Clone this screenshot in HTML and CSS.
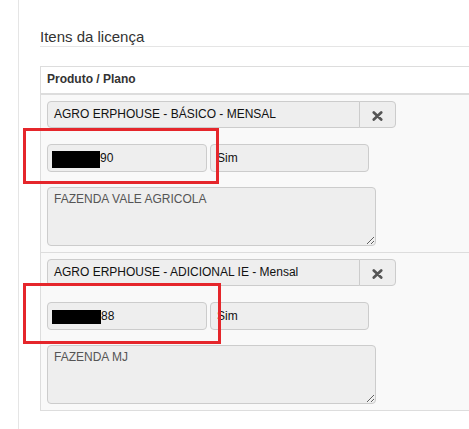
FILE: index.html
```html
<!DOCTYPE html>
<html lang="pt">
<head>
<meta charset="utf-8">
<title>Itens da licença</title>
<link rel="stylesheet" href="styles.css">
</head>
<body>
<div class="page">
  <div class="content">
    <div class="legend">Itens da licença</div>
    <div class="table">
      <div class="thead">Produto / Plano</div>
      <div class="row">
        <div class="group">
          <div class="field grow">AGRO ERPHOUSE - BÁSICO - MENSAL</div>
          <div class="addon"><svg width="11" height="10" viewBox="0 0 11 10"><path d="M1.8 1.5 L9.2 8.5 M9.2 1.5 L1.8 8.5" stroke="#555" stroke-width="2.7" stroke-linecap="round"/></svg></div>
        </div>
        <div class="pair">
          <div class="field f-left"><span class="redact r1"></span>90</div>
          <div class="field f-right">Sim</div>
        </div>
        <textarea class="notes" readonly>FAZENDA VALE AGRICOLA</textarea>
      </div>
      <div class="row">
        <div class="group">
          <div class="field grow">AGRO ERPHOUSE - ADICIONAL IE - Mensal</div>
          <div class="addon"><svg width="11" height="10" viewBox="0 0 11 10"><path d="M1.8 1.5 L9.2 8.5 M9.2 1.5 L1.8 8.5" stroke="#555" stroke-width="2.7" stroke-linecap="round"/></svg></div>
        </div>
        <div class="pair">
          <div class="field f-left"><span class="redact r2"></span>88</div>
          <div class="field f-right">Sim</div>
        </div>
        <textarea class="notes" readonly>FAZENDA MJ</textarea>
      </div>
    </div>
  </div>
  <div class="mark m1"></div>
  <div class="mark m2"></div>
</div>
</body>
</html>
```

FILE: styles.css
```css
html, body {
  margin: 0;
  padding: 0;
  background: #fff;
  overflow: hidden;
}
body {
  font-family: "Liberation Sans", Arial, sans-serif;
  color: #333;
}
.page {
  position: relative;
  width: 469px;
  height: 429px;
}
.content {
  margin-left: 18px;
  border-left: 1px solid #e5e5e5;
  height: 429px;
  padding-left: 21px;
  box-sizing: border-box;
  padding-top: 28px;
}
.legend {
  font-size: 15px;
  line-height: 18px;
  color: #333;
  border-bottom: 1px solid #e5e5e5;
}
.table {
  margin-top: 19px;
  border: 1px solid #ddd;
  border-right: none;
  background: #f9f9f9;
}
.thead {
  background: #fff;
  font-weight: bold;
  font-size: 12px;
  line-height: 17px;
  padding: 4px 6px 5px;
  border-bottom: 2px solid #ddd;
  color: #333;
}
.row {
  padding: 6px;
}
.row + .row {
  border-top: 1px solid #ddd;
}
.group {
  display: flex;
  height: 27px;
  margin-bottom: 16px;
}
.field {
  box-sizing: border-box;
  background: #eee;
  border: 1px solid #ccc;
  border-radius: 4px;
  font-size: 12px;
  line-height: 26px;
  color: #111;
  padding: 0 6px;
  white-space: nowrap;
  overflow: hidden;
}
.grow {
  flex: 0 0 313px;
  height: 27px;
  border-radius: 4px 0 0 4px;
  line-height: 25px;
}
.addon {
  box-sizing: border-box;
  flex: 0 0 37px;
  height: 27px;
  background: #eee;
  border: 1px solid #ccc;
  margin-left: -1px;
  border-radius: 0 4px 4px 0;
  display: flex;
  align-items: center;
  justify-content: center;
  padding-top: 2px;
}
.pair {
  display: flex;
  gap: 3px;
  height: 28px;
  margin-bottom: 15px;
}
.f-left {
  flex: 0 0 160px;
  height: 28px;
  display: flex;
  align-items: center;
  padding-left: 4px;
}
.f-right {
  flex: 0 0 159px;
  height: 28px;
}
.redact {
  display: inline-block;
  background: #000;
}
.r1 {
  width: 48px;
  height: 17px;
  margin-top: 2px;
}
.r2 {
  width: 49px;
  height: 14px;
  margin-top: 1px;
}
.notes {
  display: block;
  box-sizing: border-box;
  width: 329px;
  height: 59px;
  margin: 0;
  background: #eee;
  border: 1px solid #ccc;
  border-radius: 4px;
  font-family: "Liberation Sans", Arial, sans-serif;
  font-size: 12px;
  line-height: 17px;
  color: #555;
  padding: 3px 6px;
  resize: vertical;
  outline: none;
}
.mark {
  position: absolute;
  border: 3px solid #e5262b;
  box-sizing: border-box;
}
.m1 {
  left: 23px;
  top: 128px;
  width: 196px;
  height: 56px;
}
.m2 {
  left: 23px;
  top: 283px;
  width: 198px;
  height: 61px;
}
```
